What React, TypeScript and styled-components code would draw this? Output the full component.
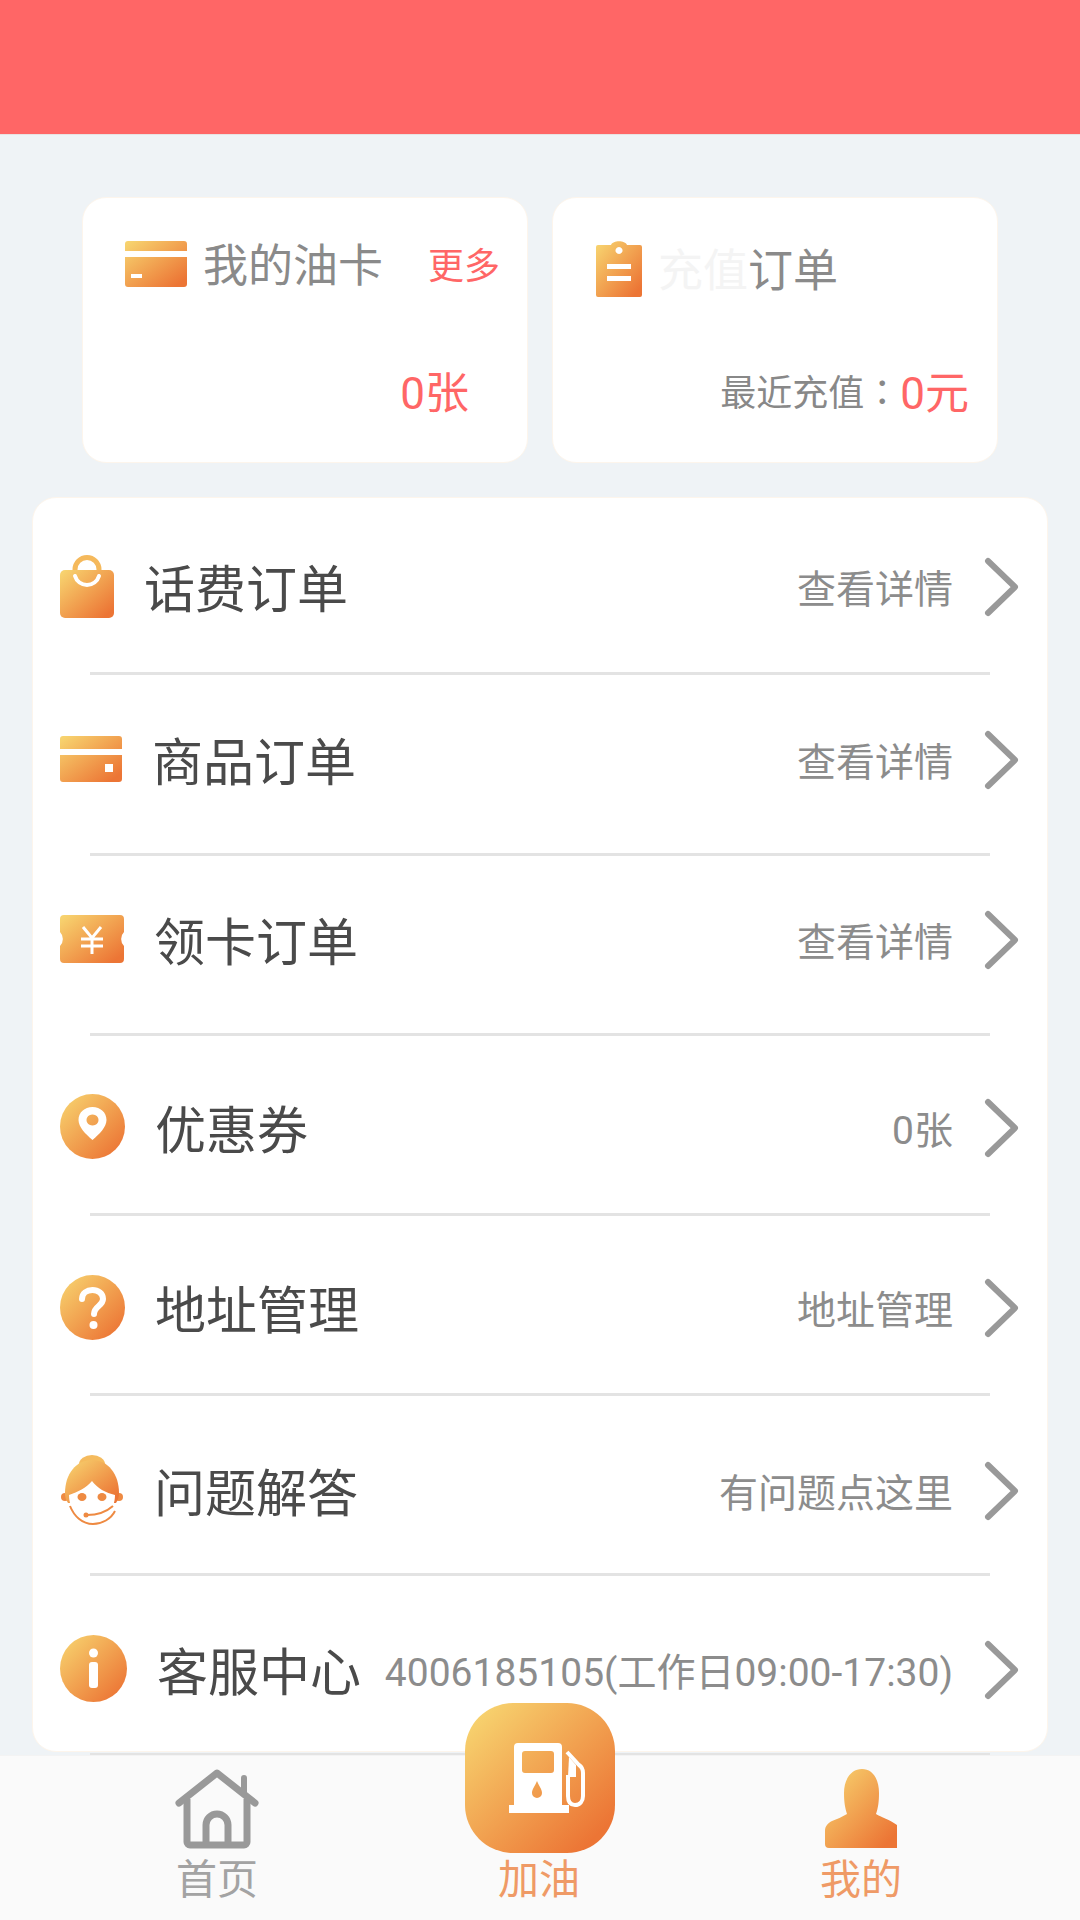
import styled, { createGlobalStyle } from "styled-components";
import type { ReactNode } from "react";

const red = "#ff6666";

const GlobalStyle = createGlobalStyle`
  html, body {
    margin: 0;
    padding: 0;
    background: #eff3f6;
    font-family: Roboto, "Noto Sans CJK SC", sans-serif;
  }
  * { box-sizing: border-box; }
`;

const Page = styled.div`
  width: 1080px;
  height: 1920px;
  display: flex;
  flex-direction: column;
  overflow: hidden;
  background: #eff3f6;
`;

const TopBar = styled.header`
  height: 135px;
  flex: none;
  background: ${red};
  border-bottom: 1px solid #e8e2e2;
`;

const Main = styled.main`
  flex: 1;
  min-height: 0;
  padding: 62px 32px 0;
`;

const CardRow = styled.section`
  display: flex;
  justify-content: center;
  gap: 24px;
  margin-bottom: 34px;
`;

const Card = styled.div`
  width: 446px;
  height: 266px;
  padding-top: 43px;
  background: #fff;
  border: 1px solid #fdf5ec;
  border-radius: 24px;
`;

const CardHead = styled.div<{ $left: number }>`
  display: flex;
  align-items: flex-start;
  height: 97px;
  padding-left: ${(p) => p.$left}px;
  padding-right: 27px;
`;

const CardTitle = styled.span<{ $drop: number }>`
  margin: ${(p) => p.$drop}px 0 0 16px;
  font-size: 45px;
  line-height: 50px;
  color: #8a8a8a;
  flex: 1;
  white-space: nowrap;
`;

const FadedWord = styled.span`
  color: #f4f4f4;
`;

const More = styled.span`
  margin-top: 1px;
  font-size: 36px;
  line-height: 50px;
  color: ${red};
`;

const CardFoot = styled.div<{ $right: number }>`
  display: flex;
  justify-content: flex-end;
  align-items: center;
  height: 60px;
  margin-top: 22px;
  padding-right: ${(p) => p.$right}px;
`;

const FootLabel = styled.span`
  font-size: 36px;
  color: #888;
`;

const Colon = styled.span`
  font-family: "Noto Sans CJK TC", sans-serif;
`;

const Amount = styled.span`
  font-size: 44px;
  color: ${red};
`;

const ListCard = styled.section`
  height: 1255px;
  padding: 0 28px 0 27px;
  background: #fff;
  border: 1px solid #fdf5ec;
  border-radius: 24px;
`;

const RowWrap = styled.div<{ $height: number; $shift: number }>`
  height: ${(p) => p.$height}px;
  padding-top: ${(p) => Math.max(p.$shift, 0)}px;
  padding-bottom: ${(p) => Math.max(-p.$shift, 0)}px;
  display: flex;
  align-items: center;
`;

const IconSlot = styled.span`
  display: flex;
  flex: none;
  margin-right: 30px;
`;

const RowTitle = styled.span`
  flex: 1;
  font-size: 51px;
  color: #4a4a4a;
  white-space: nowrap;
`;

const RowValue = styled.span`
  font-size: 39px;
  color: #8c8c8c;
  white-space: nowrap;
`;

const Chevron = styled.svg`
  flex: none;
  width: 36px;
  height: 62px;
  margin-left: 30px;
`;

const Divider = styled.div`
  height: 3px;
  margin: 0 29px 0 30px;
  background: #e3e3e3;
`;

const TabBar = styled.nav`
  position: relative;
  flex: none;
  height: 165px;
  display: flex;
  background: #fafafa;
  border-top: 1px solid #f3f3f3;
`;

const Tab = styled.div<{ $center: number }>`
  position: absolute;
  top: 0;
  left: ${(p) => p.$center - 100}px;
  width: 200px;
  display: flex;
  flex-direction: column;
  align-items: center;
`;

const TabIcon = styled.span`
  display: flex;
  height: 96px;
  padding-top: 13px;
`;

const TabLabel = styled.span<{ $active?: boolean }>`
  font-size: 41px;
  line-height: 56px;
  color: ${(p) => (p.$active ? "#ef9a66" : "#a3a3a3")};
`;

const FuelButton = styled.div`
  position: absolute;
  left: 465px;
  top: -53px;
  width: 150px;
  height: 150px;
  display: flex;
  align-items: center;
  justify-content: center;
  border-radius: 48px;
  background: linear-gradient(135deg, #f7d26e 8%, #ec7535 88%);
`;

const PumpSvg = styled.svg`
  width: 77px;
  height: 70px;
  margin-left: 14px;
`;

function Fill() {
  return (
    <defs>
      <linearGradient id="orange" x1="0" y1="0" x2="1" y2="1">
        <stop offset="0.05" stopColor="#f7d26e" />
        <stop offset="0.9" stopColor="#ec7535" />
      </linearGradient>
    </defs>
  );
}

function BagIcon() {
  return (
    <svg width="54" height="63" viewBox="0 0 54 63">
      <Fill />
      <circle cx="27" cy="14.500" r="12" fill="none" stroke="#f5b95c" strokeWidth="5" />
      <rect x="0" y="15" width="54" height="48" rx="5" fill="url(#orange)" />
      <path d="M15 21a12.500 12.500 0 0 0 24 0" fill="none" stroke="#fff" strokeWidth="4" strokeLinecap="round" />
    </svg>
  );
}

function BankCardIcon() {
  return (
    <svg width="62" height="46" viewBox="0 0 62 46">
      <Fill />
      <path
        fillRule="evenodd"
        fill="url(#orange)"
        d="M3 0h56a3 3 0 0 1 3 3v10H0V3a3 3 0 0 1 3-3zM0 19h62v24a3 3 0 0 1-3 3H3a3 3 0 0 1-3-3zM45 28v8h8v-8z"
      />
    </svg>
  );
}

function SmallCardIcon() {
  return (
    <svg width="62" height="46" viewBox="0 0 62 46">
      <Fill />
      <path
        fillRule="evenodd"
        fill="url(#orange)"
        d="M3 0h56a3 3 0 0 1 3 3v7H0V3a3 3 0 0 1 3-3zM0 16h62v27a3 3 0 0 1-3 3H3a3 3 0 0 1-3-3zM6 33v4h11v-4z"
      />
    </svg>
  );
}

function ClipboardIcon() {
  return (
    <svg width="46" height="56" viewBox="0 0 46 56">
      <Fill />
      <path
        fillRule="evenodd"
        fill="url(#orange)"
        d="M2 4h13c2-5 14-5 16 0h13a2 2 0 0 1 2 2v48a2 2 0 0 1-2 2H2a2 2 0 0 1-2-2V6a2 2 0 0 1 2-2zM23 6a3.500 3.500 0 1 0 .01 0zM11 23v5h24v-5zM11 35v5h24v-5z"
      />
    </svg>
  );
}

function TicketIcon() {
  return (
    <svg width="64" height="48" viewBox="0 0 64 48">
      <Fill />
      <path
        fill="url(#orange)"
        d="M4 0h56a4 4 0 0 1 4 4v13a10 10 0 0 0 0 14v13a4 4 0 0 1-4 4H4a4 4 0 0 1-4-4V31a10 10 0 0 0 0-14V4a4 4 0 0 1 4-4z"
      />
      <path d="M23 12l9 11 9-11M21 24h22M21 31h22M32 23v16" fill="none" stroke="#fff" strokeWidth="3" />
    </svg>
  );
}

function PinIcon() {
  return (
    <svg width="65" height="65" viewBox="0 0 65 65">
      <Fill />
      <circle cx="32.500" cy="32.500" r="32.500" fill="url(#orange)" />
      <path
        fillRule="evenodd"
        fill="#fff"
        d="M32.500 13c8 0 14 5.500 14 13 0 7-7 14-14 20-7-6-14-13-14-20 0-7.500 6-13 14-13zM32.500 20.500a6 5.500 0 1 0 .01 0z"
      />
    </svg>
  );
}

function QuestionIcon() {
  return (
    <svg width="65" height="65" viewBox="0 0 65 65">
      <Fill />
      <circle cx="32.500" cy="32.500" r="32.500" fill="url(#orange)" />
      <path
        d="M22 24c0-6 5-9 10.500-9s10.500 3.500 10.500 9c0 7-9 7-9 15"
        fill="none"
        stroke="#fff"
        strokeWidth="6"
        strokeLinecap="round"
      />
      <circle cx="33.500" cy="50" r="4" fill="#fff" />
    </svg>
  );
}

function GirlIcon() {
  return (
    <svg width="64" height="70" viewBox="0 0 64 70">
      <Fill />
      <ellipse cx="32" cy="9" rx="13" ry="9" fill="#f5bb5e" />
      <circle cx="5" cy="42" r="4" fill="#ee8a42" />
      <circle cx="59" cy="42" r="4" fill="#ee8a42" />
      <path d="M32 5c16 0 27 14 27 33 0 4-1 7-3 10H8c-2-3-3-6-3-10C5 19 16 5 32 5z" fill="url(#orange)" />
      <path d="M9 40c9-3 17-7 23-14 5 7 14 12 23 14 0 14-10 27-23 27S9 54 9 40z" fill="#fff" />
      <ellipse cx="22" cy="42" rx="4.500" ry="4" fill="#ee8a42" />
      <ellipse cx="42" cy="42" rx="4.500" ry="4" fill="#ee8a42" />
      <path d="M10 51c4 10 12 18 23 18 9 0 18-5 22-13" fill="none" stroke="#ee8a42" strokeWidth="2" />
      <path d="M27 60c9 0 18-2 26-9" fill="none" stroke="#ee8a42" strokeWidth="2" />
      <circle cx="26" cy="60" r="2.500" fill="#ee8a42" />
    </svg>
  );
}

function InfoIcon() {
  return (
    <svg width="67" height="67" viewBox="0 0 67 67">
      <Fill />
      <circle cx="33.500" cy="33.500" r="33.500" fill="url(#orange)" />
      <circle cx="33.500" cy="18" r="4.500" fill="#fff" />
      <rect x="29" y="27" width="9" height="26" rx="3" fill="#fff" />
    </svg>
  );
}

function HomeIcon() {
  return (
    <svg width="84" height="80" viewBox="0 0 84 80" fill="none" stroke="#999">
      <path d="M4 34L42 4l38 30" strokeWidth="7" strokeLinecap="round" strokeLinejoin="round" />
      <path d="M69 9v14" strokeWidth="6" strokeLinecap="round" />
      <path d="M12 30v43a3 3 0 0 0 3 3h54a3 3 0 0 0 3-3V30" strokeWidth="7" />
      <path d="M31 76V56a11 11 0 0 1 22 0v20" strokeWidth="7" />
    </svg>
  );
}

function PumpIcon() {
  return (
    <PumpSvg viewBox="0 0 77 70">
      <path
        fillRule="evenodd"
        fill="#fff"
        d="M5 4a4 4 0 0 1 4-4h40a4 4 0 0 1 4 4v58h7v8H0v-8h5zM16 8a3 3 0 0 0-3 3v16a3 3 0 0 0 3 3h26a3 3 0 0 0 3-3V11a3 3 0 0 0-3-3zM28 38c-2 5-5 8-5 12a5 5 0 0 0 10 0c0-4-3-7-5-12z"
      />
      <path
        d="M58 9l12 13c3 2 4 4 4 8v23c0 5-3 9-8 9s-7-4-7-9V32"
        fill="none"
        stroke="#fff"
        strokeWidth="4"
      />
      <path d="M60 14l7 8v12h-8z" fill="#fff" />
    </PumpSvg>
  );
}

function PersonIcon() {
  return (
    <svg width="73" height="80" viewBox="0 0 73 80">
      <Fill />
      <path
        fill="url(#orange)"
        d="M37 0c10 0 17 9 17 24 0 9-1 15-3 21 5 3 14 6 21 11v23H4a4 4 0 0 1-4-4V62c0-5 3-8 7-10 5-2 10-4 15-7-2-6-3-12-3-21C19 9 27 0 37 0z"
      />
    </svg>
  );
}

type RowProps = {
  icon: ReactNode;
  title: string;
  value: string;
  height: number;
  shift: number;
};

function Row({ icon, title, value, height, shift }: RowProps) {
  return (
    <>
      <RowWrap $height={height} $shift={shift}>
        <IconSlot>{icon}</IconSlot>
        <RowTitle>{title}</RowTitle>
        <RowValue>{value}</RowValue>
        <Chevron viewBox="0 0 36 62">
          <path d="M5 6l27 26L5 58" fill="none" stroke="#999" strokeWidth="6" strokeLinecap="round" strokeLinejoin="round" />
        </Chevron>
      </RowWrap>
      <Divider />
    </>
  );
}

const rows = [
  { icon: <BagIcon />, title: "话费订单", value: "查看详情", height: 174, shift: 2 },
  { icon: <BankCardIcon />, title: "商品订单", value: "查看详情", height: 178, shift: -11 },
  { icon: <TicketIcon />, title: "领卡订单", value: "查看详情", height: 177, shift: -12 },
  { icon: <PinIcon />, title: "优惠券", value: "0张", height: 177, shift: 4 },
  { icon: <QuestionIcon />, title: "地址管理", value: "地址管理", height: 177, shift: 5 },
  { icon: <GirlIcon />, title: "问题解答", value: "有问题点这里", height: 177, shift: 10 },
  { icon: <InfoIcon />, title: "客服中心", value: "4006185105(工作日09:00-17:30)", height: 177, shift: 8 },
];

export default function App() {
  return (
    <Page>
      <GlobalStyle />
      <TopBar />
      <Main>
        <CardRow>
          <Card>
            <CardHead $left={42}>
              <SmallCardIcon />
              <CardTitle $drop={1}>我的油卡</CardTitle>
              <More>更多</More>
            </CardHead>
            <CardFoot $right={58}>
              <Amount>0张</Amount>
            </CardFoot>
          </Card>
          <Card>
            <CardHead $left={43}>
              <ClipboardIcon />
              <CardTitle $drop={6}>
                <FadedWord>充值</FadedWord>订单
              </CardTitle>
            </CardHead>
            <CardFoot $right={28}>
              <FootLabel>
                最近充值<Colon>：</Colon>
              </FootLabel>
              <Amount>0元</Amount>
            </CardFoot>
          </Card>
        </CardRow>
        <ListCard>
          {rows.map((row) => (
            <Row key={row.title} {...row} />
          ))}
        </ListCard>
      </Main>
      <TabBar>
        <Tab $center={217}>
          <TabIcon>
            <HomeIcon />
          </TabIcon>
          <TabLabel>首页</TabLabel>
        </Tab>
        <FuelButton>
          <PumpIcon />
        </FuelButton>
        <Tab $center={539}>
          <TabIcon />
          <TabLabel $active>加油</TabLabel>
        </Tab>
        <Tab $center={861}>
          <TabIcon>
            <PersonIcon />
          </TabIcon>
          <TabLabel $active>我的</TabLabel>
        </Tab>
      </TabBar>
    </Page>
  );
}
